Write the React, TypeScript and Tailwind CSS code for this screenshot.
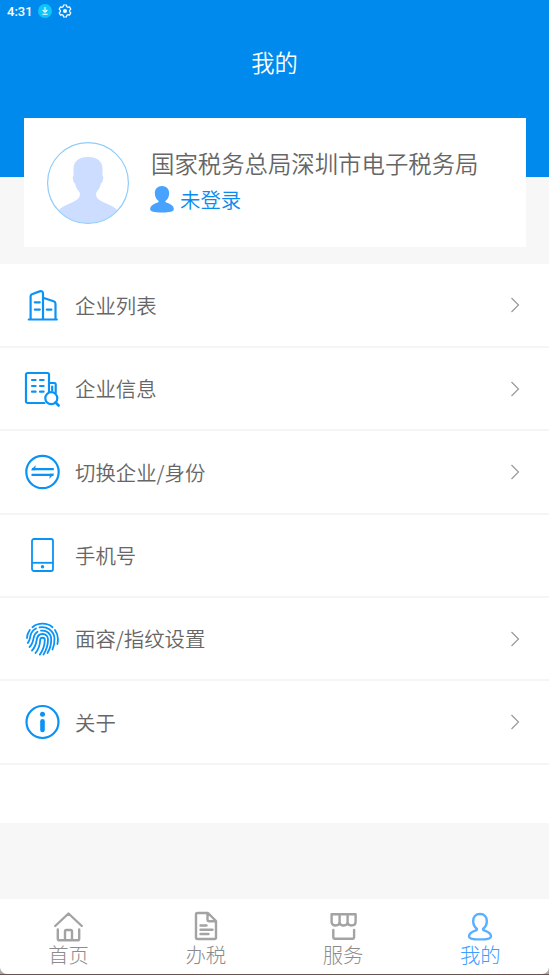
import type { ReactNode } from "react"

const BLUE = "#0a93f5"

function CompanyListIcon() {
  return (
    <svg width="36" height="36" viewBox="0 0 36 36" fill="none" stroke={BLUE} strokeWidth="2.2" strokeLinecap="round" strokeLinejoin="round">
      <path d="M4.800 32.500h28M6.600 32V9.200c0-1 .4-1.600 1.300-2L15.600 4.400c2-.7 3.400 0 3.400 2.200V32" />
      <path d="M19 10.800l10.600 3.500c1.200.4 1.900 1.100 1.900 2.400V32" />
      <path d="M10.800 15.300h5M10.800 22.600h5M22.800 22.600h4.600" />
    </svg>
  )
}

function CompanyInfoIcon() {
  return (
    <svg width="36" height="36" viewBox="0 0 36 36" fill="none" stroke={BLUE} strokeWidth="2.2" strokeLinecap="round" strokeLinejoin="round">
      <path d="M20.500 32H3.600A1.600 1.600 0 0 1 2 30.400V3.600A1.600 1.600 0 0 1 3.600 2h19.800A1.600 1.600 0 0 1 25 3.600V21" />
      <path d="M25 12h5.400c.9 0 1.300.4 1.300 1.200V22M28.200 15.500v4" />
      <path d="M8 9h3.600M16 9h3.600M8 15h3.600M16 15h3.600M8 20.700h3.600M16 20.700h3.600" />
      <circle cx="27.300" cy="27.200" r="6" />
      <path d="M31.600 31.500l3 3" strokeWidth="2.6" />
    </svg>
  )
}

function SwitchIcon() {
  return (
    <svg width="36" height="36" viewBox="0 0 36 36" fill="none" stroke={BLUE} strokeWidth="2.2">
      <circle cx="18.500" cy="18" r="16.200" />
      <path d="M29.800 15.200H8M7.500 20.800h22" />
      <path d="M6.800 16.200l4.800-5-.4 5zM30.200 19.800l-4.800 5 .4-5z" fill={BLUE} stroke="none" />
    </svg>
  )
}

function PhoneIcon() {
  return (
    <svg width="36" height="36" viewBox="0 0 36 36" fill="none" stroke={BLUE} strokeWidth="1.8">
      <rect x="8" y="2" width="21" height="32" rx="2" />
      <path d="M8 25.800h21" />
      <circle cx="18.500" cy="29.800" r="1.700" fill={BLUE} stroke="none" />
    </svg>
  )
}

function FingerprintIcon() {
  return (
    <svg width="36" height="36" viewBox="0 0 36 36" fill="none" stroke={BLUE} strokeWidth="1.8" strokeLinecap="round">
      <path d="M8.500 6.200C14 1.500 23 1.500 28.500 6.200M31 9c2.500 3.500 3.500 9 2.400 14M5.800 9C4 11.500 3 14 3 17" />
      <path d="M3.800 22C6 20 5.800 17 6.500 14.500 7.300 11.500 9 9 12 7.500M15.500 6.400C22 4.800 30 9.500 30.500 17.500c.2 3.500-.5 7.500-2 11" />
      <path d="M5.500 26C8.500 23.500 9 20 9.600 17c.6-3 1.900-5 3.900-6.200M17 9.700c5.500-.9 10 2.800 10.200 8.300.1 5-1.200 10-3.700 14" />
      <path d="M8 29.500C11.500 26 12.300 22 12.800 18.500 13.300 15 15.500 13 18.500 13c3.500 0 5.500 2.500 5.500 5.500 0 5.500-1.800 10.700-4.500 15" />
      <path d="M11.500 32c3.300-4 4.500-9 4.700-13 .1-3 4.600-3 4.600 0-.1 5.500-2 10.500-5 14.600" />
    </svg>
  )
}

function AboutIcon() {
  return (
    <svg width="36" height="36" viewBox="0 0 36 36" fill="none" stroke={BLUE} strokeWidth="2.2">
      <circle cx="18.500" cy="18" r="16" />
      <circle cx="18.500" cy="10.200" r="2.500" fill={BLUE} stroke="none" />
      <path d="M18.500 17.300v8.700" strokeWidth="4.600" strokeLinecap="round" />
    </svg>
  )
}

function Chevron() {
  return (
    <svg width="10" height="18" viewBox="0 0 10 18" fill="none" stroke="#999999" strokeWidth="1.2">
      <path d="M1.500 2l7 7-7 7" />
    </svg>
  )
}

function Avatar() {
  return (
    <svg width="82" height="82" viewBox="0 0 82 82">
      <defs>
        <clipPath id="avatar">
          <circle cx="41" cy="41" r="40" />
        </clipPath>
      </defs>
      <path
        clipPath="url(#avatar)"
        fill="#cdddff"
        d="M41 15c-9 0-14.500 4-14.500 12v6.500c-1 1-.9 2.500-.4 4.500.4 1.700.9 3 1.900 3.300.6 4 2.500 6.500 4.800 9.500v2.500c0 3-4 5.500-8.500 7.500C18 63.500 13 66 10 70V82h62V70c-3-4-8-6.500-14.300-9.200-4.500-2-8.500-4.500-8.500-7.500v-2.500c2.300-3 4.200-5.500 4.800-9.500 1-.3 1.500-1.600 1.900-3.300.5-2 .6-3.500-.4-4.500V27c0-8-5.500-12-14.500-12z"
      />
      <circle cx="41" cy="41" r="40.400" fill="none" stroke="#8fcdfb" strokeWidth="1.2" />
    </svg>
  )
}

const rows: { label: string; icon: ReactNode; arrow: boolean }[] = [
  { label: "企业列表", icon: <CompanyListIcon />, arrow: true },
  { label: "企业信息", icon: <CompanyInfoIcon />, arrow: true },
  { label: "切换企业/身份", icon: <SwitchIcon />, arrow: true },
  { label: "手机号", icon: <PhoneIcon />, arrow: false },
  { label: "面容/指纹设置", icon: <FingerprintIcon />, arrow: true },
  { label: "关于", icon: <AboutIcon />, arrow: true },
]

const tabs: { label: string; icon: ReactNode; active?: boolean }[] = [
  {
    label: "首页",
    icon: <path d="M2.200 15L15.500 2.500 28.800 15M4.800 18.500v9.200c0 1 .6 1.600 1.600 1.600h18.200c1 0 1.600-.6 1.600-1.600v-9.200M12 29v-8.700c0-.8.500-1.300 1.300-1.300h4.400c.8 0 1.300.5 1.300 1.300V29" />,
  },
  {
    label: "办税",
    icon: <path d="M18 2H7.500C6.500 2 6 2.600 6 3.500v23c0 1 .5 1.500 1.500 1.500h17c1 0 1.500-.5 1.500-1.500V10zM17.500 2v7c0 .8.400 1.200 1.200 1.200H26M10.500 14.500h6M10.500 18.800h12M10.500 23h8" />,
  },
  {
    label: "服务",
    icon: <path d="M4.600 3.300h24v7.500c0 2.300-1.600 3.700-4 3.700s-4-1.400-4-3.700c0 2.300-1.600 3.700-4 3.700s-4-1.400-4-3.700c0 2.300-1.600 3.700-4 3.700s-4-1.400-4-3.700zM12.600 3.300v7.500M20.600 3.300v7.500M6.300 19v7.500c0 .8.400 1.200 1.200 1.200h18.400c.8 0 1.200-.4 1.200-1.200V19" />,
  },
  {
    label: "我的",
    active: true,
    icon: <path d="M16 3c-4.500 0-6.800 3-6.800 7 0 3 1.300 6 3.300 7.500.8.700.4 1.500-.6 1.900-4.400 1.500-6.900 3.300-6.900 6 0 2.200 3.800 3 11 3s11-.8 11-3c0-2.700-2.500-4.500-6.900-6-1-.4-1.400-1.200-.6-1.900 2-1.500 3.300-4.500 3.300-7.500 0-4-2.300-7-6.800-7z" />,
  },
]

export default function App() {
  return (
    <div className="flex h-[975px] w-[549px] flex-col overflow-hidden bg-[#f7f7f7] font-['Noto_Sans_CJK_SC',sans-serif] font-[350] text-[#666666]">
      <header className="h-[177px] shrink-0 bg-[#018aed] text-white">
        {/* Status bar */}
        <div className="flex h-[22px] items-center pl-[7px]">
          <span className="w-[31px] font-['Roboto',sans-serif] text-[13px] leading-none font-medium">4:31</span>
          <svg width="14" height="14" viewBox="0 0 14 14" fill="none" stroke="#ffffff" strokeWidth="1.1">
            <circle cx="7" cy="7" r="7" fill="#0cc6fb" stroke="none" />
            <path d="M7 3v5M4.700 6L7 8.300 9.300 6M4.500 10.300h5" />
          </svg>
          <svg className="ml-[6px]" width="14" height="14" viewBox="0 0 14 14" fill="none" stroke="#ffffff" strokeWidth="1.2" strokeLinejoin="round">
            <path d="M5.600 1h2.800l.4 1.700 1 .6 1.700-.5 1.300 2.300L11.600 6.300v1.400l1.200 1.200-1.300 2.300-1.700-.5-1 .6L8.400 13H5.600l-.4-1.700-1-.6-1.700.5L1.200 8.900l1.200-1.200V6.300L1.200 5.100l1.300-2.300 1.700.5 1-.6z" />
            <circle cx="7" cy="7" r="2" fill="#ffffff" stroke="none" />
          </svg>
        </div>
        <h1 className="mt-[22px] text-center text-[23.3px] leading-[36px]">我的</h1>
      </header>

      <section className="mr-[23.500px] ml-[23.500px] -mt-[59px] flex h-[129px] shrink-0 items-center bg-white pl-[23.500px]">
        <Avatar />
        <div className="ml-[22px] pb-[2px]">
          <p className="text-[23.4px] leading-[36px] whitespace-nowrap">国家税务总局深圳市电子税务局</p>
          <div className="flex h-[38px] items-center text-[#0a8bf0]">
            <svg className="-ml-px" width="24" height="27" viewBox="0 0 24 27" fill="#47a3ff">
              <path d="M12 0C7.700 0 4.800 3 4.800 7.200c0 3.300 1.500 6 3.500 7.500.7.600.5 1.300-.4 1.700C3 18 .2 20 .2 23c0 2.600 3.800 3.500 11.800 3.500s11.800-.9 11.800-3.500c0-3-2.800-5-7.700-6.600-.9-.4-1.100-1.100-.4-1.700 2-1.500 3.500-4.200 3.500-7.500C19.200 3 16.300 0 12 0z" />
            </svg>
            <span className="ml-[6px] text-[20.400px]">未登录</span>
          </div>
        </div>
      </section>

      <main className="mt-[17px] h-[559px] shrink-0 bg-white pt-[0.500px]">
        {rows.map((row) => (
          <div key={row.label} className="flex h-[83.4px] items-center border-b-2 border-[#f5f5f5] pr-[29px] pl-[24px]">
            {row.icon}
            <span className="ml-[15px] flex-1 text-[20.400px]">{row.label}</span>
            {row.arrow && <Chevron />}
          </div>
        ))}
      </main>

      {/* Tab bar, grey shows behind the rounded screen corners */}
      <div className="mt-auto h-[76px] shrink-0 border-b border-[#655450] bg-[#a8a8a8]">
        <nav className="grid h-[75px] grid-cols-4 rounded-b-[7px] bg-white font-light">
          {tabs.map((tab) => (
            <div key={tab.label} className={`flex flex-col items-center pt-[12px] ${tab.active ? "text-[#3d9eff]" : "text-[#8c8c8c]"}`}>
              <svg
                className={tab.active ? "text-[#5aafff]" : "text-[#a3a3a3]"}
                width="32"
                height="32"
                viewBox="0 0 32 32"
                fill="none"
                stroke="currentColor"
                strokeWidth="2.4"
                strokeLinecap="round"
                strokeLinejoin="round"
              >
                {tab.icon}
              </svg>
              <span className="-mt-px text-[20.400px] leading-[24px]">{tab.label}</span>
            </div>
          ))}
        </nav>
      </div>
    </div>
  )
}
